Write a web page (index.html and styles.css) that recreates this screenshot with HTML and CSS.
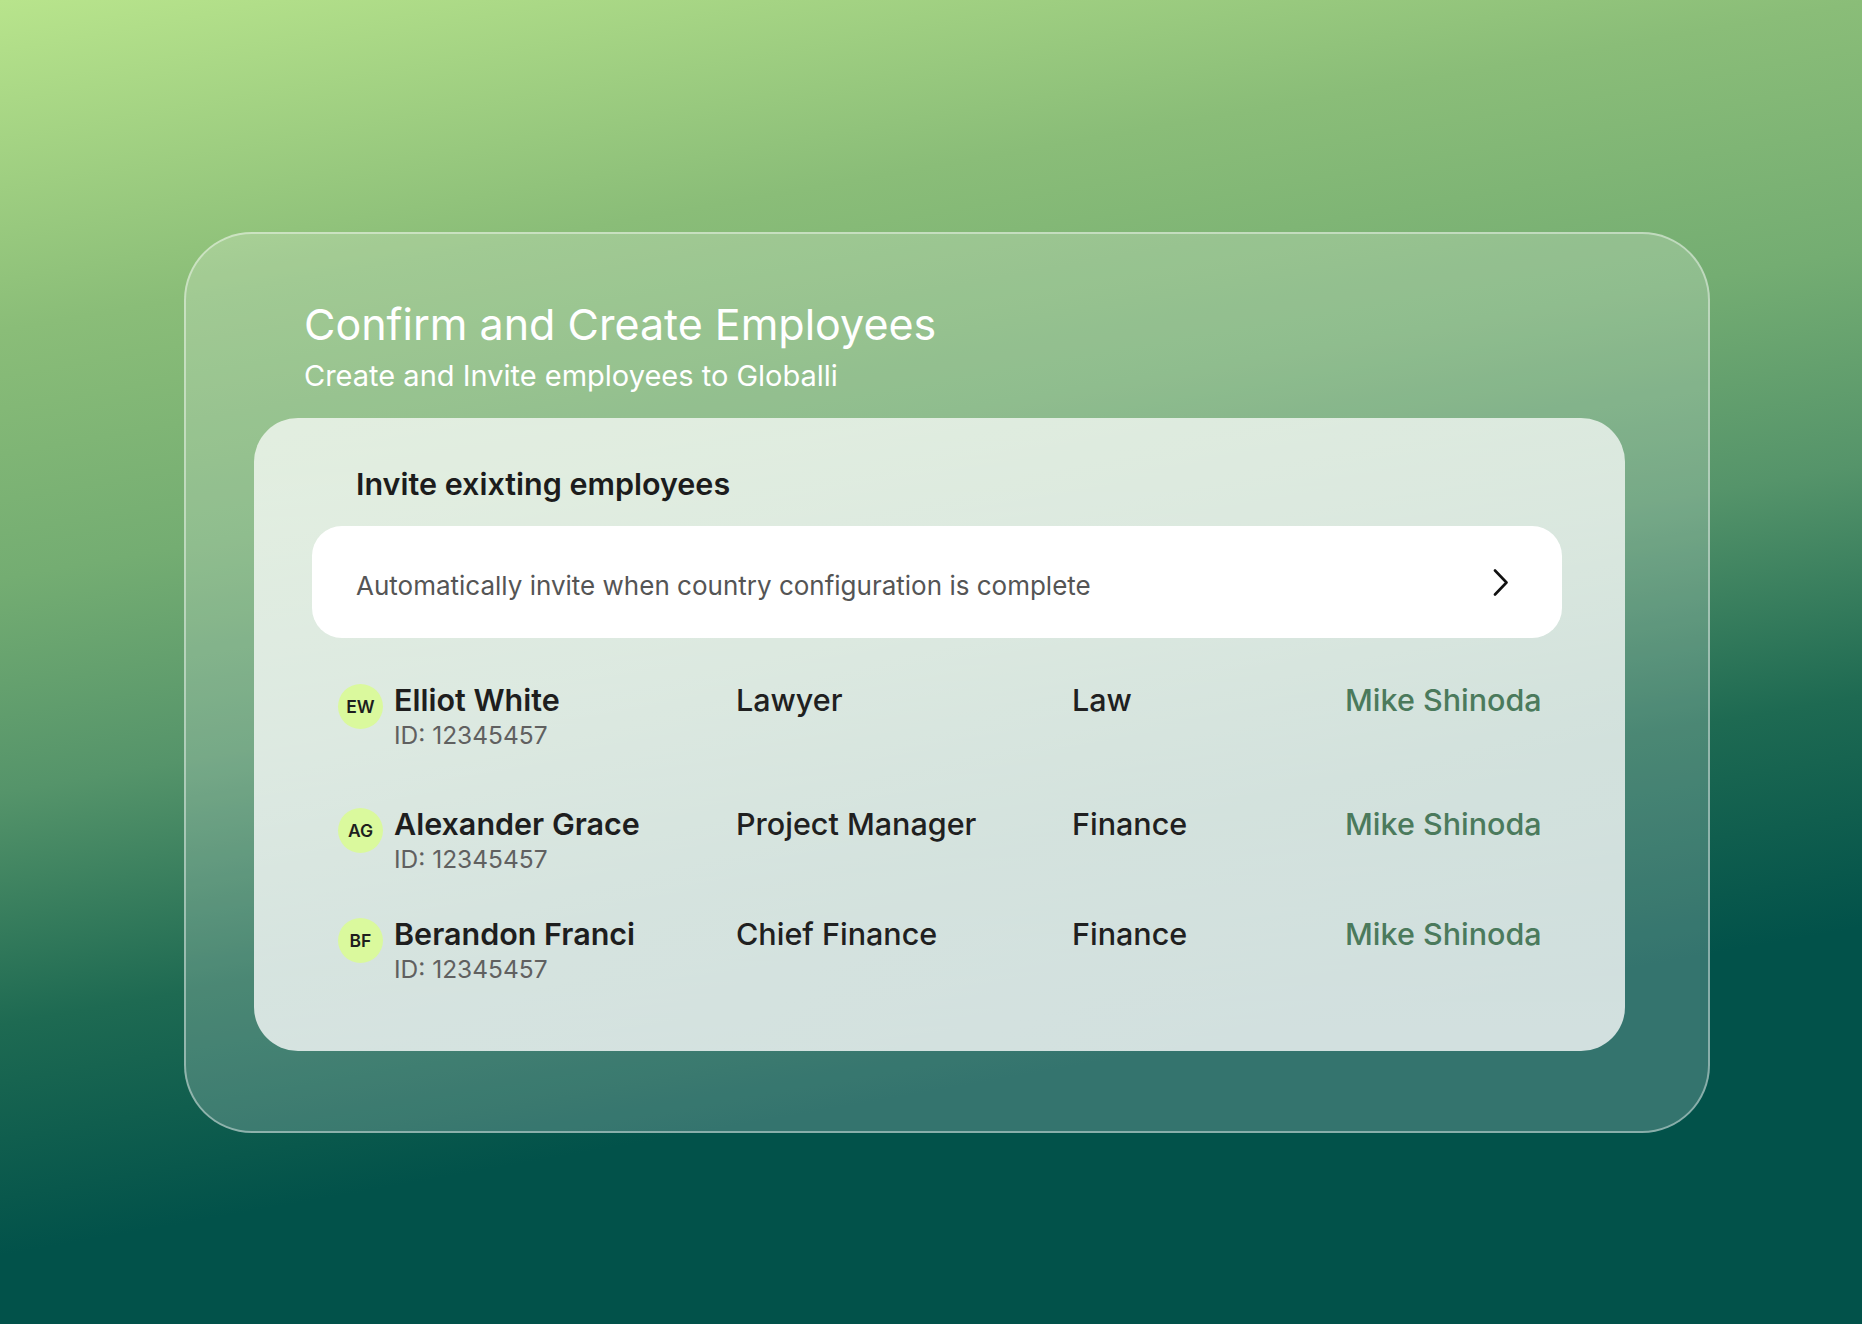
FILE: index.html
```html
<!DOCTYPE html>
<html lang="en">
<head>
<meta charset="utf-8">
<title>Confirm and Create Employees</title>
<link rel="stylesheet" href="styles.css">
</head>
<body>
<main class="page">
  <section class="card">
    <header class="card-header">
      <h1 class="title">Confirm and Create Employees</h1>
      <p class="subtitle">Create and Invite employees to Globalli</p>
    </header>
    <div class="panel">
      <h2 class="panel-title">Invite exixting employees</h2>
      <button class="auto-invite" type="button">
        <span class="auto-invite-text">Automatically invite when country configuration is complete</span>
        <svg class="chevron" width="16" height="27" viewBox="0 0 16 27" aria-hidden="true">
          <path d="M2 1.5 L13.5 13.5 L2 25.5" fill="none" stroke="#111" stroke-width="2.6" stroke-linecap="round" stroke-linejoin="round"/>
        </svg>
      </button>
      <ul class="employees">
        <li class="employee employee-first">
          <div class="person">
            <span class="avatar">EW</span>
            <div class="person-text">
              <span class="name">Elliot White</span>
              <span class="emp-id">ID: 12345457</span>
            </div>
          </div>
          <span class="cell">Lawyer</span>
          <span class="cell">Law</span>
          <span class="cell manager">Mike Shinoda</span>
        </li>
        <li class="employee employee-second">
          <div class="person">
            <span class="avatar">AG</span>
            <div class="person-text">
              <span class="name">Alexander Grace</span>
              <span class="emp-id">ID: 12345457</span>
            </div>
          </div>
          <span class="cell">Project Manager</span>
          <span class="cell">Finance</span>
          <span class="cell manager">Mike Shinoda</span>
        </li>
        <li class="employee employee-third">
          <div class="person">
            <span class="avatar">BF</span>
            <div class="person-text">
              <span class="name">Berandon Franci</span>
              <span class="emp-id">ID: 12345457</span>
            </div>
          </div>
          <span class="cell">Chief Finance</span>
          <span class="cell">Finance</span>
          <span class="cell manager">Mike Shinoda</span>
        </li>
      </ul>
    </div>
  </section>
</main>
</body>
</html>
```

FILE: styles.css
```css
* {
  box-sizing: border-box;
}

html, body {
  margin: 0;
  padding: 0;
}

body {
  width: 1862px;
  height: 1324px;
  overflow: hidden;
  font-family: Inter, "Noto Sans", "Liberation Sans", sans-serif;
  background: linear-gradient(170deg,
    #b8e48c 0%,
    #8abd78 20%,
    #74ad72 35%,
    #55946a 48%,
    #1e6a52 62%,
    #02524a 76%,
    #02524a 100%);
}

.page {
  padding: 232px 0 0 184px;
}

.card {
  width: 1526px;
  padding: 64px 83px 80px 68px;
  border: 2px solid rgba(255, 255, 255, 0.42);
  border-radius: 68px;
  background: rgba(255, 255, 255, 0.2);
}

.card-header {
  padding-left: 50px;
}

.title {
  margin: 0;
  font-size: 43px;
  line-height: 52px;
  font-weight: 400;
  color: #ffffff;
}

.subtitle {
  margin: 8px 0 0;
  font-size: 29px;
  line-height: 35px;
  font-weight: 400;
  color: #ffffff;
}

.panel {
  margin-top: 25px;
  width: 1371px;
  padding: 47px 63px 67px 58px;
  border-radius: 44px;
  background: linear-gradient(180deg, rgba(255, 255, 255, 0.72), rgba(255, 255, 255, 0.78));
}

.panel-title {
  margin: 0;
  padding-left: 44px;
  font-size: 30.5px;
  line-height: 37px;
  font-weight: 600;
  color: #1c1c1c;
}

.auto-invite {
  margin-top: 24px;
  width: 100%;
  height: 112px;
  padding: 0 53px 0 44px;
  display: flex;
  align-items: center;
  justify-content: space-between;
  border: none;
  border-radius: 30px;
  background: #ffffff;
  font-family: inherit;
  text-align: left;
  cursor: pointer;
}

.auto-invite-text {
  display: block;
  padding-top: 7px;
  font-size: 26px;
  font-weight: 400;
  color: #555555;
}

.chevron {
  display: block;
  flex: none;
}

.employees {
  list-style: none;
  margin: 43px 0 0;
  padding: 0 0 0 26px;
}

.employee {
  display: grid;
  grid-template-columns: 398px 336px 273px auto;
  align-items: start;
}

.employee-second {
  margin-top: 55px;
}

.employee-third {
  margin-top: 41px;
}

.person {
  display: flex;
  align-items: flex-start;
  gap: 11px;
}

.avatar {
  flex: none;
  width: 45px;
  height: 45px;
  margin-top: 3px;
  border-radius: 50%;
  background: #daf99d;
  display: flex;
  align-items: center;
  justify-content: center;
  font-size: 17.5px;
  font-weight: 600;
  color: #1e1e1e;
}

.person-text {
  display: flex;
  flex-direction: column;
}

.name {
  font-size: 30.5px;
  line-height: 37px;
  font-weight: 600;
  color: #1e1e1e;
}

.emp-id {
  margin-top: 2px;
  font-size: 24.5px;
  line-height: 30px;
  font-weight: 400;
  color: #606060;
}

.cell {
  font-size: 30.5px;
  line-height: 37px;
  font-weight: 500;
  color: #202020;
}

.manager {
  color: #4b7a5c;
}
```
